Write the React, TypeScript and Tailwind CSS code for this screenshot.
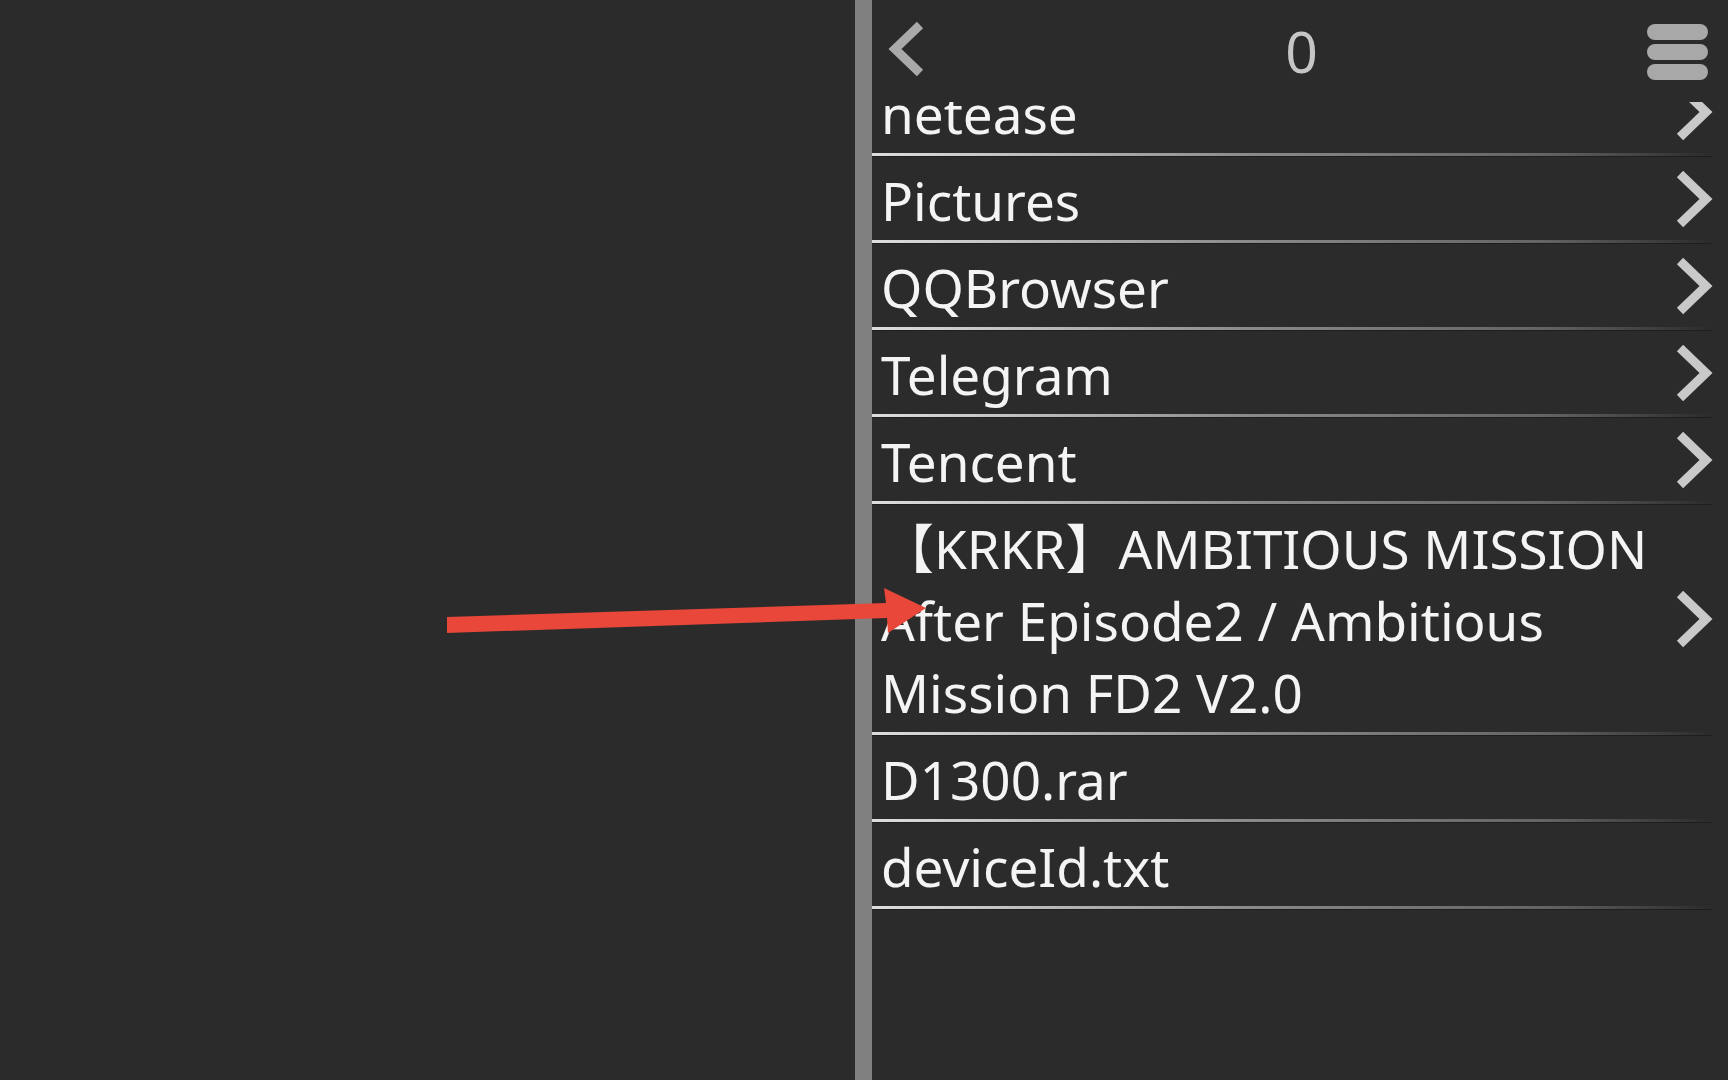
import React from "react";

const FONT = '"Noto Sans", "Open Sans", "Noto Sans CJK SC", sans-serif';

function ChevronRight() {
  return (
    <svg width="40" height="60" viewBox="0 0 40 60" className="shrink-0">
      <polyline points="6,3 32,28 6,53" fill="none" stroke="#c9c9c9" strokeWidth="9" strokeLinejoin="miter" strokeLinecap="butt" />
    </svg>
  );
}

function Row({ children, arrow = true }: { children: React.ReactNode; arrow?: boolean }) {
  return (
    <div className="flex flex-col">
      <div className="flex items-center pt-[8px] pb-[3px] min-h-[83px]">
        <div className="flex-1 pl-[9px] text-[53px] leading-[72px] text-[#f4f4f4]" style={{ fontFamily: FONT }}>
          {children}
        </div>
        {arrow ? (
          <div className="mr-[14px] flex items-center">
            <ChevronRight />
          </div>
        ) : null}
      </div>
      <div className="mr-[16px] h-[3px] bg-[linear-gradient(to_right,#dedede_0%,#c4c4c4_15%,#8a8a8a_45%,#646464_80%,#2b2b2b_100%)]" />
      <div className="mr-[16px] h-[1px] bg-[#1e1e1e]" />
    </div>
  );
}

export default function App() {
  return (
    <div className="relative flex h-[1080px] w-full overflow-hidden bg-[#2b2b2b]">
      <div className="w-[855px] shrink-0" />
      <div className="w-[17px] shrink-0 bg-[#808080]" />
      <div className="flex min-w-0 flex-1 flex-col">
        <div className="relative z-10 grid h-[102px] shrink-0 grid-cols-[1fr_auto_1fr] items-center bg-[#2b2b2b]">
          <div className="flex items-center pl-[14px]">
            <svg width="44" height="60" viewBox="0 0 44 60">
              <polyline points="34,4 9,28 34,52" fill="none" stroke="#a9a9a9" strokeWidth="9" strokeLinecap="butt" />
            </svg>
          </div>
          <div className="pl-[3px] text-[57px] leading-none text-[#c6c6c6]" style={{ fontFamily: FONT }}>
            0
          </div>
          <div className="flex justify-end pr-[20px]">
            <div className="flex w-[61px] flex-col gap-[4px] pt-[2px]">
              <div className="h-[16px] rounded-full bg-[#a8a8a8]" />
              <div className="h-[16px] rounded-full bg-[#a8a8a8]" />
              <div className="h-[16px] rounded-full bg-[#a8a8a8]" />
            </div>
          </div>
        </div>
        <div className="flex-1 overflow-hidden">
          <div className="-mt-[32px] flex flex-col">
            <Row>netease</Row>
            <Row>Pictures</Row>
            <Row>QQBrowser</Row>
            <Row>Telegram</Row>
            <Row>Tencent</Row>
            <Row>
              <span className="leading-[0px]">【</span>KRKR<span className="leading-[0px]">】</span>AMBITIOUS MISSION
              <br />
              After Episode2 / Ambitious
              <br />
              Mission FD2 V2.0
            </Row>
            <Row arrow={false}>D1300.rar</Row>
            <Row arrow={false}>deviceId.txt</Row>
          </div>
        </div>
      </div>
      <svg className="pointer-events-none absolute left-0 top-0" width="1728" height="1080" viewBox="0 0 1728 1080">
        <polygon points="447,617 886,603 884,588 926,608 888,633 887,618 447,633" fill="#e8473a" />
      </svg>
    </div>
  );
}
